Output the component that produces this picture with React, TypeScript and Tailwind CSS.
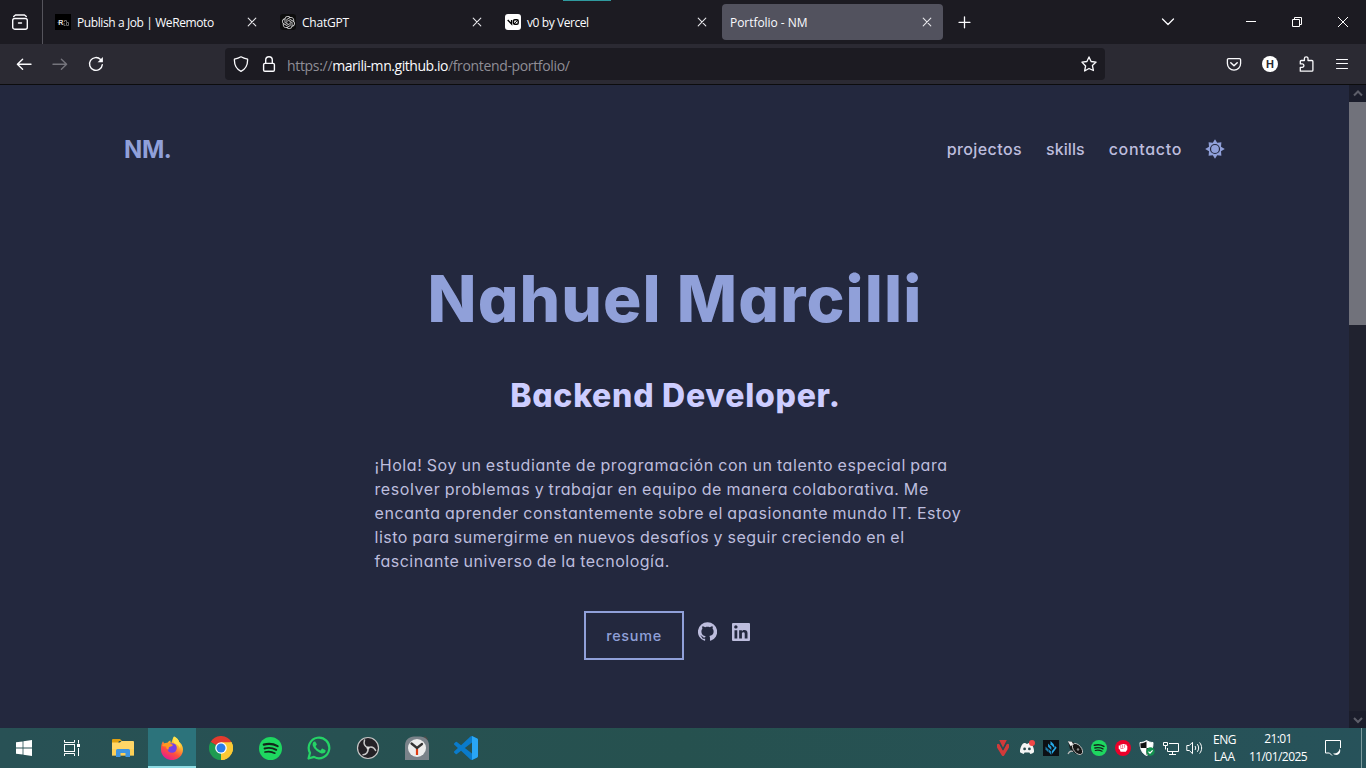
import React from 'react';

type IconProps = { className?: string };

/* ---------- Browser chrome icons ---------- */

const stroke = {
  fill: 'none',
  stroke: 'currentColor',
  strokeLinecap: 'round' as const,
  strokeLinejoin: 'round' as const,
};

const CloseTab = () => (
  <svg viewBox="0 0 16 16" className="size-4 shrink-0 text-[#e6e6ea]" {...stroke} strokeWidth="1.1">
    <path d="M4.2 4.2l7.6 7.6M11.8 4.2l-7.6 7.6" />
  </svg>
);

const RecentTabs = () => (
  <svg viewBox="0 0 16 16" className="size-4" {...stroke} strokeWidth="1.4">
    <rect x=".7" y="4.500" width="14.6" height="10.700" rx="2" />
    <path d="M3.500 1h9M1.700 2.600L3.500 1M14.300 2.600L12.500 1M6.500 9h3" />
  </svg>
);

const BackArrow = () => (
  <svg viewBox="0 0 16 16" className="size-4 text-[#fbfbfe]" {...stroke} strokeWidth="1.4">
    <path d="M15 8.300H1.7M6.6 3.300L1.4 8.300l5.2 5" />
  </svg>
);

const ForwardArrow = () => (
  <svg viewBox="0 0 16 16" className="size-4 text-[#75747c]" {...stroke} strokeWidth="1.4">
    <path d="M1 8.300h13.3M9.4 3.300l5.2 5-5.2 5" />
  </svg>
);

const Reload = () => (
  <svg viewBox="0 0 16 16" className="size-4 text-[#fbfbfe]" {...stroke} strokeWidth="1.4">
    <path d="M14.3 8.6A6.4 6.4 0 1 1 12.6 3.6l1.2 1.2" />
    <path d="M14.9 1v5.200H9.6z" fill="currentColor" stroke="none" />
  </svg>
);

const Shield = () => (
  <svg viewBox="0 0 16 16" className="size-4" {...stroke} strokeWidth="1.3">
    <path d="M8 .8c1.8 1.1 4 1.9 6.6 2.4C14.800 8.500 12.600 13 8 15.300 3.400 13 1.200 8.500 1.400 3.200 4 2.700 6.200 1.900 8 .8z" />
  </svg>
);

const Lock = () => (
  <svg viewBox="0 0 16 16" className="size-4" {...stroke} strokeWidth="1.4">
    <rect x="2.6" y="7.400" width="10.800" height="7.900" rx="1.300" />
    <path d="M4.700 7.200V4a3.300 3.300 0 0 1 6.600 0v3.200" />
  </svg>
);

const Star = () => (
  <svg viewBox="0 0 16 16" className="size-4" {...stroke} strokeWidth="1.3">
    <path d="M8 .9l2.100 4.600 5 .6-3.700 3.400 1 5L8 12.500l-4.400 2.500 1-5L.9 6.100l5-.6z" />
  </svg>
);

const Pocket = () => (
  <svg viewBox="0 0 16 16" className="size-4" {...stroke} strokeWidth="1.3">
    <path d="M2.600 2.600h10.800a1.200 1.200 0 0 1 1.200 1.200v3.700a6.600 6.600 0 0 1-13.200 0V3.800a1.200 1.200 0 0 1 1.200-1.200z" />
    <path d="M4.800 6.800L8 9.800l3.200-3" strokeWidth="1.5" />
  </svg>
);

const Extensions = () => (
  <svg viewBox="0 0 16 16" className="size-4" {...stroke} strokeWidth="1.3">
    <path d="M2.300 15.200V11.300h1.900a1.700 1.700 0 0 0 0-3.400H2.300V5.500a1 1 0 0 1 1-1h3.100V2.600a1.800 1.800 0 0 1 3.600 0v1.900h3.900a1 1 0 0 1 1 1v8.700a1 1 0 0 1-1 1z" />
  </svg>
);

const Hamburger = () => (
  <svg viewBox="0 0 16 16" className="size-4" {...stroke} strokeWidth="1.1">
    <path d="M2.500 3.500h11M2.500 7.500h11M2.500 12.500h11" />
  </svg>
);

/* ---------- Favicons ---------- */

const RemotoFavicon = () => (
  <span className="flex size-4 shrink-0 items-center justify-center bg-black font-['Liberation_Sans'] text-[7px] leading-none font-bold tracking-[-0.5px] text-[#8a8a8a]">
    <span className="text-[5px]">-</span>
    <span className="text-[#e2e2e2]">R</span>
    <svg viewBox="0 0 6 7" className="h-[7px] w-[6px]" fill="none" stroke="#6a6a6a">
      <path d="M1.500 3V1.500h2V3M3.500 3.500h2v3h-2zM1 4v2.500h1.500" />
    </svg>
  </span>
);

const ChatGptFavicon = () => (
  <span className="flex size-4 shrink-0 items-center justify-center rounded-[3px] bg-[#0d0d0d]">
    <svg viewBox="0 0 24 24" className="size-[13px] text-[#d6d6d6]" fill="currentColor">
      <path d="M22.282 9.821a5.985 5.985 0 0 0-.516-4.910 6.046 6.046 0 0 0-6.510-2.900A6.065 6.065 0 0 0 4.981 4.182a5.985 5.985 0 0 0-3.998 2.900 6.046 6.046 0 0 0 .743 7.097 5.980 5.980 0 0 0 .510 4.911 6.051 6.051 0 0 0 6.515 2.900A5.985 5.985 0 0 0 13.260 24a6.056 6.056 0 0 0 5.772-4.206 5.990 5.990 0 0 0 3.997-2.900 6.056 6.056 0 0 0-.747-7.073zM13.260 22.430a4.476 4.476 0 0 1-2.876-1.040l.141-.081 4.779-2.758a.795.795 0 0 0 .392-.681v-6.737l2.020 1.168a.071.071 0 0 1 .038.052v5.583a4.504 4.504 0 0 1-4.494 4.494zM3.600 18.304a4.470 4.470 0 0 1-.535-3.014l.142.085 4.783 2.759a.771.771 0 0 0 .780 0l5.843-3.369v2.332a.080.080 0 0 1-.033.062L9.740 19.950a4.500 4.500 0 0 1-6.140-1.646zM2.340 7.896a4.485 4.485 0 0 1 2.366-1.973V11.600a.766.766 0 0 0 .388.676l5.815 3.355-2.020 1.168a.076.076 0 0 1-.071 0l-4.830-2.786A4.504 4.504 0 0 1 2.340 7.872zm16.597 3.855l-5.833-3.387L15.119 7.200a.076.076 0 0 1 .071 0l4.830 2.791a4.494 4.494 0 0 1-.676 8.105v-5.678a.790.790 0 0 0-.407-.667zm2.010-3.023l-.141-.085-4.774-2.782a.776.776 0 0 0-.785 0L9.409 9.230V6.897a.066.066 0 0 1 .028-.061l4.830-2.787a4.500 4.500 0 0 1 6.680 4.660zM8.307 12.863l-2.020-1.164a.080.080 0 0 1-.038-.057V6.074a4.500 4.500 0 0 1 7.376-3.453l-.142.080L8.704 5.460a.795.795 0 0 0-.393.681zm1.097-2.366l2.602-1.500 2.607 1.500v2.999l-2.597 1.500-2.607-1.500z" />
    </svg>
  </span>
);

const V0Favicon = () => (
  <span className="flex size-4 shrink-0 items-center justify-center rounded-[3px] bg-white">
    <svg viewBox="0 0 12 8" className="h-2 w-3 text-black" fill="none" stroke="currentColor" strokeWidth="1.400">
      <path d="M.7 2L4.600 6V2" />
      <rect x="6.500" y="1.700" width="4.700" height="4.500" rx="1.300" />
      <path d="M6.900 6L11 1.900" strokeWidth="1" />
    </svg>
  </span>
);

/* ---------- Portfolio icons ---------- */

const Sun = () => (
  <svg viewBox="0 0 20 20" className="size-5 text-[#90a0d9]">
    <path
      fill="currentColor"
      d="M10 .2l2.200 3.500 4.200-.4-.4 4.500L19.800 10l-3.800 2.200.4 4.500-4.200-.4L10 19.800l-2.200-3.500-4.200.4.4-4.500L.2 10 4 7.800l-.4-4.500 4.200.4z"
    />
    <circle cx="10" cy="10" r="4.500" fill="none" stroke="#23283e" strokeWidth="1.200" />
  </svg>
);

const GitHub = ({ className }: IconProps) => (
  <svg viewBox="1 1 22 22" className={className} fill="currentColor">
    <path d="M12 1.270a11 11 0 00-3.480 21.460c.55.09.73-.28.73-.55v-1.840c-3.030.64-3.670-1.460-3.670-1.460-.55-1.290-1.280-1.650-1.280-1.650-.92-.65.1-.65.1-.65 1.100 0 1.730 1.100 1.730 1.100.92 1.650 2.570 1.200 3.210.92a2 2 0 01.64-1.470c-2.470-.27-5.040-1.190-5.040-5.500 0-1.100.46-2.100 1.200-2.840a3.760 3.760 0 010-2.930s.91-.28 3.110 1.100c1.800-.49 3.700-.49 5.500 0 2.100-1.380 3.020-1.100 3.020-1.100a3.760 3.760 0 01.1 2.930c.83.74 1.200 1.740 1.200 2.940 0 4.210-2.570 5.130-5.040 5.400.45.37.82.92.82 2.020v3.030c0 .27.1.64.73.55A11 11 0 0012 1.270" />
  </svg>
);

const LinkedIn = ({ className }: IconProps) => (
  <svg viewBox="3 3 18 18" className={className} fill="currentColor">
    <path d="M20 3a1 1 0 0 1 1 1v16a1 1 0 0 1-1 1H4a1 1 0 0 1-1-1V4a1 1 0 0 1 1-1h16m-1.500 15.500v-5.300a3.260 3.260 0 0 0-3.260-3.260c-.85 0-1.840.52-2.320 1.300v-1.110h-2.790v8.370h2.790v-4.930c0-.77.62-1.400 1.390-1.400a1.400 1.400 0 0 1 1.400 1.400v4.930h2.790M6.880 8.560a1.680 1.680 0 0 0 1.680-1.680c0-.93-.75-1.690-1.680-1.690a1.690 1.690 0 0 0-1.690 1.690c0 .93.76 1.680 1.690 1.680m1.390 9.940v-8.370H5.500v8.370h2.770z" />
  </svg>
);

/* ---------- Taskbar icons ---------- */

const WindowsLogo = () => (
  <svg viewBox="0 0 16 16" className="size-4" fill="#fff">
    <path d="M0 2.300l6.600-.9v6.200H0zM7.400 1.300L16 .1v7.500H7.400zM0 8.400h6.600v6.200L0 13.700zM7.400 8.400H16v7.500l-8.600-1.200z" />
  </svg>
);

const TaskView = () => (
  <svg viewBox="0 0 16 16" className="size-4" fill="none" stroke="#fff">
    <path d="M.5 0v2.500h10V0M.5 16v-2.500h10V16M14.500 0v3.500M14.500 8v8" />
    <rect x=".5" y="4.500" width="10" height="7" />
    <rect x="13" y="4" width="3" height="3" fill="#fff" stroke="none" />
  </svg>
);

const Explorer = () => (
  <svg viewBox="0 0 22 18" className="h-[18px] w-[22px]">
    <path d="M0 1a1 1 0 0 1 1-1h7l2 2h-3l-1 2H0z" fill="#e0a010" />
    <path d="M0 3.500h8l1.500-1.500H21a1 1 0 0 1 1 1V16.500H0z" fill="#ffd667" />
    <path d="M0 10h22v6.500H0z" fill="#fccb4b" opacity=".6" />
    <path d="M4 18v-6.500a1.500 1.500 0 0 1 1.500-1.500h11a1.500 1.500 0 0 1 1.500 1.500V18h-4.500v-4h-5v4z" fill="#3f95e0" />
  </svg>
);

const Firefox = () => (
  <svg viewBox="0 0 24 24" className="size-6">
    <defs>
      <linearGradient id="fx" x1=".8" y1="0" x2=".25" y2="1">
        <stop offset="0" stopColor="#fff44f" />
        <stop offset=".35" stopColor="#ffb02e" />
        <stop offset=".65" stopColor="#ff4f3d" />
        <stop offset="1" stopColor="#e3159a" />
      </linearGradient>
    </defs>
    <path d="M14 .5c4 1.800 4.800 4.200 5.200 5.500 1.400.8 3.800 3.700 3.800 7.500A11 10.700 0 0 1 1 13.300c0-3.300.5-5.800 2-8l1.200 2.200c1-.6 2-.8 3.200-.7 1-1.300 1.900-1.900 3.200-2.300-.3 1.300 0 2 .7 2.500C12 5 12.600 2.500 14 .5z" fill="url(#fx)" />
    <circle cx="12" cy="12" r="4.800" fill="#7542e5" />
    <path d="M2 10c1.500-3 4-3.600 6-2.700 1.500.2 3 .7 5 1.700-1 1.500-3 1.500-4 2.200-.6.900 0 1.500-.6 2.200C7 14 6 12 6.300 10.500z" fill="#ff9a20" />
    <path d="M14 .5c4 1.800 4.800 4.200 5.200 5.500 1 2 1.500 4 .8 6.500-.6-2.500-2.400-4-4.500-4.800-2-1-3-3.500-1.500-7.200z" fill="#ffe14a" />
  </svg>
);

const Chrome = () => (
  <svg viewBox="0 0 24 24" className="size-6">
    <path d="M12 12L1.600 6A12 12 0 0 1 22.400 6z" fill="#e33b2e" />
    <path d="M12 12l10.400-6A12 12 0 0 1 12 24z" fill="#fcc934" />
    <path d="M12 12v12A12 12 0 0 1 1.600 6z" fill="#1e9b50" />
    <path d="M12 6.300h10.500A12 12 0 0 1 12 24l4.900-9z" fill="#fcc934" />
    <circle cx="12" cy="12" r="5.800" fill="#fff" />
    <circle cx="12" cy="12" r="4.500" fill="#2b7de9" />
  </svg>
);

const Spotify = ({ className }: IconProps) => (
  <svg viewBox="0 0 24 24" className={className}>
    <circle cx="12" cy="12" r="12" fill="#1ed760" />
    <g fill="none" stroke="#12261b" strokeLinecap="round">
      <path d="M5 8c5-1.400 10-.9 14.400 1.500" strokeWidth="2.300" />
      <path d="M5.800 12c4.400-1.200 8.400-.7 12.200 1.400" strokeWidth="2" />
      <path d="M6.300 15.700c3.800-1 7-.6 10.300 1.200" strokeWidth="1.700" />
    </g>
  </svg>
);

const WhatsApp = () => (
  <svg viewBox="0 0 24 24" className="size-6">
    <path d="M1.500 22.500l1.500-5.600a10.300 10.300 0 1 1 4 4z" fill="none" stroke="#25d366" strokeWidth="2.200" strokeLinejoin="round" />
    <path d="M8.600 6.200c-.3-.6-.6-.6-1-.6-.9 0-2 1.100-2 2.800 0 1.500 1.100 3.200 2.600 4.900 1.700 1.900 4 3.700 6.400 4.100 1.900.3 3.700-.9 3.900-2 .2-1 .1-1.200-.2-1.400l-2.700-1.300c-.5-.2-.7 0-.9.3l-1 1.200c-.3.3-.5.3-.9.1-1.700-.8-3.200-2-4.100-3.700-.2-.4 0-.6.2-.8l.8-1c.1-.3.2-.5 0-.9z" fill="#25d366" />
  </svg>
);

const Obs = () => (
  <svg viewBox="0 0 24 24" className="size-6">
    <circle cx="12" cy="12" r="10.500" fill="#242126" stroke="#c6c6c6" strokeWidth="1.200" />
    <g fill="none" stroke="#c8c8c8" strokeWidth="1.500" strokeLinecap="round">
      <path d="M8.500 4c-1 3.600.3 6.600 3.500 7.700" />
      <path d="M19.600 14.500c-1.600-3.300-4.600-4.200-7.600-2.800" />
      <path d="M7 18.700c3.400 0 5.600-2.700 5-7" />
    </g>
    <circle cx="12" cy="12" r="1.500" fill="#ddd" />
  </svg>
);

const AlarmClock = () => (
  <svg viewBox="0 0 24 24" className="size-6">
    <path d="M18 2l2-2 3 3-2 2z" fill="#4c4a48" />
    <path d="M0 24V9.500C0 4 4 .5 9 .5h6c5 0 9 3.500 9 9V24z" fill="#7a8289" />
    <circle cx="12" cy="12" r="9" fill="#ececec" />
    <path d="M12 12v7" stroke="#e03c12" strokeWidth="2.200" />
    <path d="M6.500 7.500L12 12l5-4" fill="none" stroke="#333" strokeWidth="2.300" strokeLinecap="round" />
  </svg>
);

const VsCode = () => (
  <svg viewBox="0 0 24 24" className="size-6">
    <path
      d="M23.150 2.587L18.210.21a1.494 1.494 0 0 0-1.705.29l-9.460 8.630-4.120-3.128a.999.999 0 0 0-1.276.057L.327 7.261A1 1 0 0 0 .326 8.740L3.899 12 .326 15.260a1 1 0 0 0 .001 1.479L1.650 17.940a.999.999 0 0 0 1.276.057l4.120-3.128 9.460 8.630a1.492 1.492 0 0 0 1.704.29l4.942-2.377A1.500 1.500 0 0 0 24 20.060V3.939a1.500 1.500 0 0 0-.850-1.352zm-5.146 14.861L10.826 12l7.178-5.448v10.896z"
      fill="#0a7bcb"
    />
    <path d="M18 .1l5.150 2.487A1.500 1.500 0 0 1 24 3.939V20.060a1.500 1.500 0 0 1-.85 1.350L18 23.900z" fill="#29a6f5" />
  </svg>
);

const Valorant = () => (
  <svg viewBox="0 0 12 16" className="h-4 w-3" fill="#d23a3a">
    <path d="M2.200 0h7.600L6 7.500zM0 4.200l2.200-.4L6 10.800l3.800-7 2.200.4V7.500L6.800 16H5.200L0 7.500z" />
    <path d="M2.200 2.800L6 9.800l3.800-7" fill="none" stroke="#28484d" strokeWidth=".8" />
  </svg>
);

const Discord = () => (
  <svg viewBox="0 0 16 16" className="size-4">
    <path d="M3.800 3.700C5 3 6 3 6.500 3l.5.800h2L9.500 3c1 0 2 .2 3 .7 1.800 3 2.800 5.800 2.500 8.500-1.300 1-2.500 1.500-3.700 1.700l-.9-1.500H5.600l-.9 1.500c-1.200-.2-2.600-.8-3.700-1.700C.7 9 2 6 3.800 3.700z" fill="#f4f4f4" />
    <circle cx="5.600" cy="8.900" r="1.400" fill="#28484d" />
    <circle cx="10.400" cy="8.900" r="1.400" fill="#28484d" />
    <circle cx="13" cy="3" r="3" fill="#f04747" />
  </svg>
);

const BlueDiamond = () => (
  <svg viewBox="0 0 16 16" className="size-4">
    <path d="M0 0h16v16H0z" fill="#0c0f14" />
    <g fill="#27a9e8">
      <path d="M7.500 1L11 4.500v3.300L7.500 4.200z" />
      <path d="M5 3.500l3.300 3.500v3L5 6.700z" opacity=".9" />
      <path d="M2.500 6.500L5.500 9.500v3L2.500 9.500z" opacity=".7" />
      <path d="M11.500 5.500l2.200 2.300L9 14V11l2.500-3z" />
      <path d="M5.800 9.500l2.500 2V15L5.800 12z" opacity=".8" />
    </g>
  </svg>
);

const Speaker = () => (
  <svg viewBox="0 0 16 16" className="size-4">
    <path d="M1 1l5 1 8 8 1.500 4.500L9 14 3 9z" fill="#17191a" />
    <ellipse cx="10.500" cy="9" rx="3.800" ry="6.500" transform="rotate(-40 10.500 9)" fill="#161616" stroke="#c9c9c9" strokeWidth=".9" />
    <circle cx="11" cy="9.500" r="1.200" fill="#8a8a8a" />
    <path d="M.8 1.200l4 .6 1.400 2.500-2.500 2z" fill="#eee" />
    <path d="M1 14c1.500-3 3-3.500 5-2.500" fill="none" stroke="#bbb" strokeWidth="1.200" />
  </svg>
);

const RedFist = () => (
  <svg viewBox="0 0 16 16" className="size-4">
    <circle cx="8" cy="8" r="8" fill="#eb0029" />
    <path d="M3.700 5.500h1.800V4.600h2v-.5h2v.5h2v1l.8.3v3.600l-1.500 2.300H5.600L4.700 9.500l-1-.8z" fill="#fff" />
    <path d="M5.700 5.500v2.300M7.600 5v2.800M9.600 5v2.800M5.500 8.500h3" stroke="#eb0029" strokeWidth=".5" />
  </svg>
);

const Defender = () => (
  <svg viewBox="0 0 16 16" className="size-4">
    <path d="M7.500.5c2 1.400 4 2 6.500 2C14 8.500 12.500 13 7.500 15.500 2.500 13 1 8.500 1 2.500c2.500 0 4.500-.6 6.500-2z" fill="#fff" stroke="#fff" />
    <path d="M7.500 1.500V8H1.700C1.500 6.500 1.400 5 1.400 3.300c2.500 0 4.300-.6 6.100-1.800zM7.500 8h5.600c-.7 3-2.400 5.300-5.600 7z" fill="#121212" />
    <circle cx="11.500" cy="11.500" r="4.200" fill="#12914e" />
    <path d="M9.500 11.600l1.500 1.500 2.600-2.800" fill="none" stroke="#fff" strokeWidth="1.200" />
  </svg>
);

const Network = () => (
  <svg viewBox="0 0 16 16" className="size-4" fill="none" stroke="#fff">
    <path d="M6 3.500h9.500v8H4.500V8M9.500 11.500v3M6 14.500h7M.5 2.500h4v3h-4zM2.500 5.500v4" />
  </svg>
);

const Volume = () => (
  <svg viewBox="0 0 18 16" className="h-4 w-[18px]" fill="none" stroke="#fff">
    <path d="M.8 5.500h2.500L6.500 2.300v11.400L3.300 10.500H.8zM9 6c.9 1.200.9 2.800 0 4M11.300 4.200c1.800 2.300 1.800 5.300 0 7.600M13.600 2.500c2.700 3.300 2.700 7.700 0 11" />
  </svg>
);

const Notifications = () => (
  <svg viewBox="0 0 16 16" className="size-4" fill="none" stroke="#fff">
    <path d="M15.500 8V.5H.5v12.500h4l2.500 2.500" />
    <path d="M14.800 8.500c1.500 3.500-.8 7-4.800 6.300-1-.2-1.500-.8-1.800-1.300 3.500.3 5.800-1.500 6.600-5z" fill="#fff" stroke="none" />
  </svg>
);

/* ---------- Browser chrome ---------- */

function Tab({ icon, title, active, className }: { icon?: React.ReactNode; title: string; active?: boolean; className: string }) {
  return (
    <div className={`mr-1 flex h-9 w-[221px] items-center rounded-[4px] pr-2 pl-2 ${active ? 'bg-[#52525e]' : ''}`}>
      {icon}
      <span className={`flex-1 pt-[2px] text-[12px] leading-4 whitespace-nowrap text-[#fbfbfe] ${icon ? 'pl-[6px]' : ''} ${className}`}>
        {title}
      </span>
      <CloseTab />
    </div>
  );
}

function TabStrip() {
  return (
    <div className="relative flex h-11 items-center bg-[#1c1b22] text-[#fbfbfe]">
      <div className="absolute top-0 left-[563px] h-px w-12 bg-[#2f9a9f]" />
      <div className="flex h-11 w-[43px] items-center justify-center border-r border-[#55545c] pr-[2px]">
        <RecentTabs />
      </div>
      <div className="flex pl-1">
        <Tab icon={<RemotoFavicon />} title="Publish a Job | WeRemoto" className="tracking-[-0.4px]" />
        <Tab icon={<ChatGptFavicon />} title="ChatGPT" className="tracking-[-0.2px]" />
        <Tab icon={<V0Favicon />} title="v0 by Vercel" className="tracking-[-0.42px]" />
        <Tab title="Portfolio - NM" active className="tracking-[-0.05px]" />
      </div>
      <div className="flex w-[35px] items-center justify-center">
        <svg viewBox="0 0 16 16" className="size-4" {...stroke} strokeWidth="1.3">
          <path d="M7.500 2.800v11M2 8.300h11" />
        </svg>
      </div>
      <div className="flex flex-1 items-center justify-end gap-[30px] pr-[15px]">
        <svg viewBox="0 0 16 16" className="mr-[37px] size-4" {...stroke} strokeWidth="1.300">
          <path d="M2.500 5l5.500 5.500L13.500 5" />
        </svg>
        <svg viewBox="0 0 16 16" className="size-4" stroke="#fff">
          <path d="M3 7.500h10" />
        </svg>
        <svg viewBox="0 0 16 16" className="size-4" fill="none" stroke="#fff">
          <path d="M3.500 5.500h7v7h-7zM5.500 5.500v-2h7v7h-2" />
        </svg>
        <svg viewBox="0 0 16 16" className="size-4" stroke="#fff" strokeWidth="1">
          <path d="M3 3l10 10M13 3L3 13" />
        </svg>
      </div>
    </div>
  );
}

function Toolbar() {
  return (
    <div className="flex h-[41px] items-center border-b border-[#0c0c0d] bg-[#2b2a33] text-[#fbfbfe]">
      <div className="flex w-[225px] items-center gap-5 pl-4">
        <BackArrow />
        <ForwardArrow />
        <Reload />
      </div>
      <div className="flex h-8 w-[880px] items-center rounded-[4px] bg-[#1c1b22] px-2">
        <Shield />
        <span className="ml-3 flex">
          <Lock />
        </span>
        <span className="ml-[10px] flex-1 pt-[3px] text-[14px] leading-5 whitespace-nowrap text-[#8f8e96]">
          <span className="tracking-[-0.32px]">https://</span>
          <span className="tracking-[-0.45px] text-[#fbfbfe]">marili-mn.github.io</span>
          <span className="tracking-[-0.35px]">/frontend-portfolio/</span>
        </span>
        <Star />
      </div>
      <div className="flex flex-1 items-center justify-end gap-5 pr-4">
        <Pocket />
        <span className="flex size-4 items-center justify-center rounded-full bg-white font-['Liberation_Sans'] text-[11px] leading-none font-bold text-[#2b2a33]">
          H
        </span>
        <Extensions />
        <Hamburger />
      </div>
    </div>
  );
}

/* ---------- Portfolio page ---------- */

function Portfolio() {
  return (
    <div className="flex w-[1349px] flex-col bg-[#23283e] font-[Inter,sans-serif] text-[#bdbddd] [font-feature-settings:'cv11']">
      <header className="mx-auto flex h-32 w-[1101px] items-center justify-between">
        <span className="pt-[2px] text-[24px] leading-8 font-bold tracking-[-0.4px] text-[#90a0d9]">NM.</span>
        <nav className="flex items-center gap-6 text-base font-medium">
          <a className="tracking-[0.41px]">projectos</a>
          <a className="tracking-[0.05px]">skills</a>
          <a className="-mr-px tracking-[0.68px]">contacto</a>
          <Sun />
        </nav>
      </header>
      <main className="flex flex-col items-center pt-[54px]">
        <h1 className="pl-px text-[64px] leading-[64px] font-extrabold tracking-[1.080px] text-[#90a0d9]">Nahuel Marcilli</h1>
        <h2 className="mt-[49px] pl-[2px] text-[32px] leading-8 font-extrabold tracking-[0.740px] text-[#cdcdff]">Backend Developer.</h2>
        <p className="mt-[41px] w-[600px] text-base leading-6 whitespace-nowrap">
          <span className="block tracking-[0.58px] [word-spacing:-0.7px]">¡Hola! Soy un estudiante de programación con un talento especial para</span>
          <span className="block tracking-[0.58px] [word-spacing:-0.7px]">resolver problemas y trabajar en equipo de manera colaborativa. Me</span>
          <span className="block tracking-[0.58px] [word-spacing:-0.7px]">encanta aprender constantemente sobre el apasionante mundo IT. Estoy</span>
          <span className="block tracking-[0.52px] [word-spacing:-0.7px]">listo para sumergirme en nuevos desafíos y seguir creciendo en el</span>
          <span className="block tracking-[0.5px] [word-spacing:-0.7px]">fascinante universo de la tecnología.</span>
        </p>
        <div className="mt-[38px] flex w-[181px] items-start">
          <a className="flex h-[49px] w-[100px] items-center justify-center border-2 border-[#90a0d9] text-[14.400px] font-medium tracking-[0.700px] text-[#90a0d9]">
            resume
          </a>
          <div className="flex pt-[11px] pl-[14px]">
            <GitHub className="size-[19px]" />
            <LinkedIn className="mt-px ml-[15px] size-[18px]" />
          </div>
        </div>
      </main>
    </div>
  );
}

function Scrollbar() {
  return (
    <div className="flex w-[17px] flex-col bg-[#20222f]">
      <div className="flex h-[17px] items-center justify-center bg-[#1b1d2b]">
        <svg viewBox="0 0 10 8" className="h-2 w-[10px]" fill="none" stroke="#5d5e69" strokeWidth="2">
          <path d="M1 5.500l4-4 4 4" />
        </svg>
      </div>
      <div className="h-[223px] bg-[#71727b]" />
      <div className="flex-1" />
      <div className="flex h-[17px] items-center justify-center bg-[#1b1d2b]">
        <svg viewBox="0 0 10 8" className="h-2 w-[10px]" fill="none" stroke="#5d5e69" strokeWidth="2">
          <path d="M1 2l4 4 4-4" />
        </svg>
      </div>
    </div>
  );
}

/* ---------- Windows taskbar ---------- */

function Taskbar() {
  const apps = [<Explorer />, <Firefox />, <Chrome />, <Spotify className="size-[23px]" />, <WhatsApp />, <Obs />, <AlarmClock />, <VsCode />];
  const tray = [<Valorant />, <Discord />, <BlueDiamond />, <Speaker />, <Spotify className="size-4" />, <RedFist />, <Defender />, <Network />, <Volume />];
  return (
    <footer className="flex h-10 bg-linear-to-r from-[#285155] via-[#26514f] to-[#27525a] text-white">
      <div className="flex w-12 items-center justify-center">
        <WindowsLogo />
      </div>
      <div className="flex w-[51px] items-center justify-center pr-[3px]">
        <TaskView />
      </div>
      {apps.map((app, i) => (
        <div
          key={i}
          className={`mr-px flex w-12 items-center justify-center ${i === 1 ? 'border-b-2 border-[#8edbe3] bg-[#2c737b] pt-[2px]' : ''}`}
        >
          {app}
        </div>
      ))}
      <div className="flex-1" />
      <div className="flex items-center">
        {tray.map((item, i) => (
          <div key={i} className="flex w-6 items-center justify-center">
            {item}
          </div>
        ))}
      </div>
      <div className="flex w-[35px] flex-col items-center justify-center text-[12px] leading-[17px]">
        <span className="tracking-[-0.4px]">ENG</span>
        <span>LAA</span>
      </div>
      <div className="flex w-[72px] flex-col items-center justify-center text-[12px] leading-[18px]">
        <span className="tracking-[-0.6px]">21:01</span>
        <span className="tracking-[-0.55px]">11/01/2025</span>
      </div>
      <div className="flex w-[47px] items-center justify-center pr-[9px]">
        <Notifications />
      </div>
      <div className="w-[5px] border-l border-[#7d9b9e]" />
    </footer>
  );
}

export default function App() {
  return (
    <div className="flex h-[768px] w-[1366px] flex-col overflow-hidden font-['Open_Sans','Noto_Sans',sans-serif]">
      <TabStrip />
      <Toolbar />
      <div className="flex flex-1">
        <Portfolio />
        <Scrollbar />
      </div>
      <Taskbar />
    </div>
  );
}
